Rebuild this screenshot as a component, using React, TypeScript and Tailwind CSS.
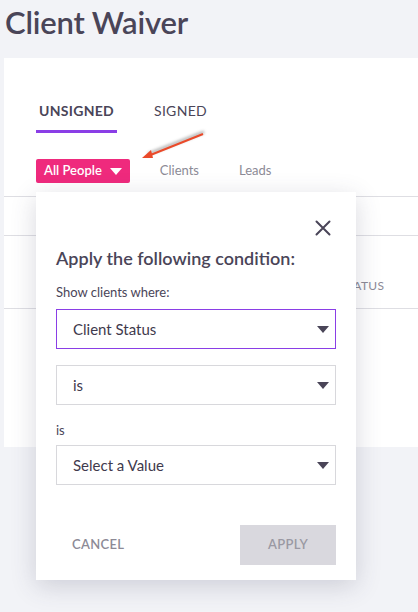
import React from "react";

const Caret = ({ className = "" }: { className?: string }) => (
  <svg width="12" height="7" viewBox="0 0 12 7" className={className}>
    <path d="M0 0 H12 L6 7 Z" fill="currentColor" />
  </svg>
);

function Select({ label, active }: { label: string; active?: boolean }) {
  return (
    <div
      className={`h-[40px] flex items-center justify-between pl-[16px] pr-[6px] border ${
        active ? "border-[#8a3ee6]" : "border-[#d8d8dc]"
      } bg-white text-[15px] text-[#3f3a4d]`}
    >
      <span>{label}</span>
      <Caret className="text-[#4a4558]" />
    </div>
  );
}

export default function App() {
  return (
    <div
      className="relative w-[418px] h-[612px] overflow-hidden bg-[#f2f3f7]"
      style={{ fontFamily: "Lato, 'Noto Sans', sans-serif" }}
    >
      <h1 className="pl-[5px] pt-[4px] h-[58px] text-[31px] leading-[36px] font-semibold text-[#4a4558] tracking-[-0.2px]">
        Client Waiver
      </h1>
      <div className="ml-[4px] bg-white h-[389px]">
        <div className="flex pl-[32px] pt-[41px]">
          <div className="flex flex-col items-center w-[81px]">
            <span className="text-[14px] leading-[24px] font-bold tracking-[0.3px] text-[#4a4558]">UNSIGNED</span>
            <div className="mt-[7px] h-[3px] w-full bg-[#8a3ee6]" />
          </div>
          <span className="ml-[37px] text-[14px] leading-[24px] tracking-[0.3px] text-[#4a4558]">SIGNED</span>
        </div>
        <div className="flex items-center pl-[32px] mt-[26px] h-[24px]">
          <div className="flex items-center gap-[8px] h-[24px] px-[8px] rounded-[2px] bg-[#ef2a7d] text-white text-[13px] font-semibold">
            All People
            <Caret className="text-white" />
          </div>
          <span className="ml-[30px] text-[13px] text-[#8c8a96]">Clients</span>
          <span className="ml-[40px] text-[13px] text-[#8c8a96]">Leads</span>
        </div>
        <div className="mt-[13px] border-t border-[#dedee3] h-[39px]" />
        <div className="border-t border-[#dedee3] h-[73px] flex items-end pb-[13px] pl-[336px]">
          <span className="text-[12px] tracking-[0.3px] text-[#8c8a96]">STATUS</span>
        </div>
        <div className="border-t border-[#dedee3]" />
      </div>

      {/* Arrow annotation */}
      <svg className="absolute left-[136px] top-[126px]" width="80" height="40" viewBox="0 0 80 40">
        <defs>
          <filter id="sh" x="-20%" y="-50%" width="140%" height="200%">
            <feGaussianBlur stdDeviation="1.6" />
          </filter>
        </defs>
        <line x1="68" y1="6" x2="12" y2="28" stroke="#888" strokeWidth="2.5" filter="url(#sh)" opacity="0.7" />
        <line x1="67" y1="8" x2="12" y2="30" stroke="#ea4a2a" strokeWidth="2" />
        <path d="M6 32 L15 24 L17 32 Z" fill="#ea4a2a" />
      </svg>

      {/* Popup */}
      <div className="absolute left-[36px] top-[192px] w-[320px] h-[388px] bg-white shadow-[0_6px_24px_rgba(60,60,90,0.2)] px-[20px]">
        <div className="flex justify-end pt-[28px] pr-[5px]">
          <svg width="16" height="16" viewBox="0 0 16 16">
            <path d="M1.5 1.5 L14.5 14.5 M14.5 1.5 L1.5 14.5" stroke="#4a4558" strokeWidth="2" strokeLinecap="round" />
          </svg>
        </div>
        <div className="mt-[10px] text-[18px] leading-[24px] font-semibold text-[#4a4558]">
          Apply the following condition:
        </div>
        <div className="mt-[13px] text-[13px] leading-[18px] text-[#4a4558]">Show clients where:</div>
        <div className="mt-[8px] w-[280px]">
          <Select label="Client Status" active />
          <div className="mt-[16px]">
            <Select label="is" />
          </div>
          <div className="mt-[16px] text-[13px] leading-[18px] text-[#4a4558]">is</div>
          <div className="mt-[6px]">
            <Select label="Select a Value" />
          </div>
          <div className="mt-[40px] flex items-center justify-between">
            <span className="ml-[16px] text-[13px] font-semibold tracking-[0.3px] text-[#8c8a96]">CANCEL</span>
            <div className="w-[96px] h-[40px] flex items-center justify-center bg-[#d9d8de] text-[13px] font-semibold tracking-[0.3px] text-[#9a98a3]">
              APPLY
            </div>
          </div>
        </div>
      </div>
    </div>
  );
}
